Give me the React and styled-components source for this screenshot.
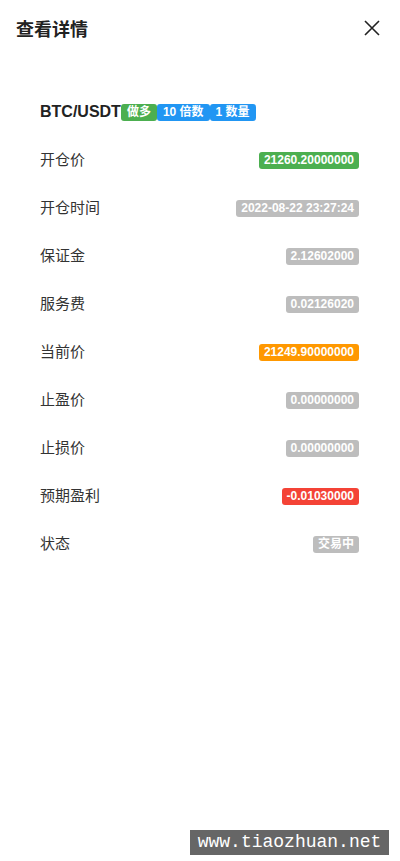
import React from "react";
import styled, { createGlobalStyle } from "styled-components";

const Global = createGlobalStyle`
  html, body { margin: 0; padding: 0; background: #fff; }
  body { font-family: "Liberation Sans", "Noto Sans CJK SC", sans-serif; }
`;

const Page = styled.div`
  width: 400px;
  min-height: 861px;
  background: #fff;
  position: relative;
`;

const Header = styled.div`
  height: 56px;
  display: flex;
  align-items: center;
  justify-content: space-between;
  padding: 0 20px 0 16px;
`;

const Title = styled.div`
  font-size: 18px;
  font-weight: bold;
  color: #222;
  margin-top: -1px;
`;

const Close = styled.button`
  width: 16px;
  height: 16px;
  padding: 0;
  border: none;
  background: none;
  display: flex;
`;

const List = styled.div`
  padding: 32px 41px 0 40px;
`;

const Row = styled.div`
  height: 48px;
  display: flex;
  align-items: center;
  justify-content: ${(p) => (p.$start ? "flex-start" : "space-between")};
`;

const Pair = styled.span`
  font-size: 16px;
  font-weight: bold;
  color: #222;
`;

const Label = styled.span`
  font-size: 15px;
  line-height: 18px;
  color: #333;
  margin-top: -1px;
`;

const colors = {
  green: "#4caf50",
  blue: "#2196f3",
  gray: "#bdbdbd",
  orange: "#ff9800",
  red: "#f44336",
};

const Tag = styled.span`
  display: inline-block;
  height: 17px;
  line-height: 17px;
  padding: 0 6px;
  font-size: 12px;
  font-weight: bold;
  color: #fff;
  background: ${(p) => colors[p.$c]};
  border-radius: 3px;
`;

const Badge = styled.span`
  display: inline-block;
  height: 17px;
  line-height: 17px;
  padding: 0 5px;
  font-size: 12px;
  font-weight: bold;
  color: #fff;
  background: ${(p) => colors[p.$c]};
  border-radius: 3px;
`;

const Watermark = styled.div`
  position: absolute;
  left: 190px;
  top: 830px;
  width: 199px;
  height: 25px;
  background: #666;
  color: #fff;
  font-family: "Liberation Mono", "DejaVu Sans Mono", monospace;
  font-size: 18px;
  line-height: 25px;
  text-align: center;
`;

const rows = [
  ["开仓价", "21260.20000000", "green"],
  ["开仓时间", "2022-08-22 23:27:24", "gray"],
  ["保证金", "2.12602000", "gray"],
  ["服务费", "0.02126020", "gray"],
  ["当前价", "21249.90000000", "orange"],
  ["止盈价", "0.00000000", "gray"],
  ["止损价", "0.00000000", "gray"],
  ["预期盈利", "-0.01030000", "red"],
  ["状态", "交易中", "gray"],
];

export default function App() {
  return (
    <Page>
      <Global />
      <Header>
        <Title>查看详情</Title>
        <Close aria-label="close">
          <svg width="16" height="16" viewBox="0 0 16 16">
            <path d="M1 1 L15 15 M15 1 L1 15" stroke="#222" strokeWidth="1.6" fill="none" />
          </svg>
        </Close>
      </Header>
      <List>
        <Row $start>
          <Pair>BTC/USDT</Pair>
          <Tag $c="green">做多</Tag>
          <Tag $c="blue">10 倍数</Tag>
          <Tag $c="blue">1 数量</Tag>
        </Row>
        {rows.map(([l, v, c]) => (
          <Row key={l}>
            <Label>{l}</Label>
            <Badge $c={c}>{v}</Badge>
          </Row>
        ))}
      </List>
      <Watermark>www.tiaozhuan.net</Watermark>
    </Page>
  );
}
